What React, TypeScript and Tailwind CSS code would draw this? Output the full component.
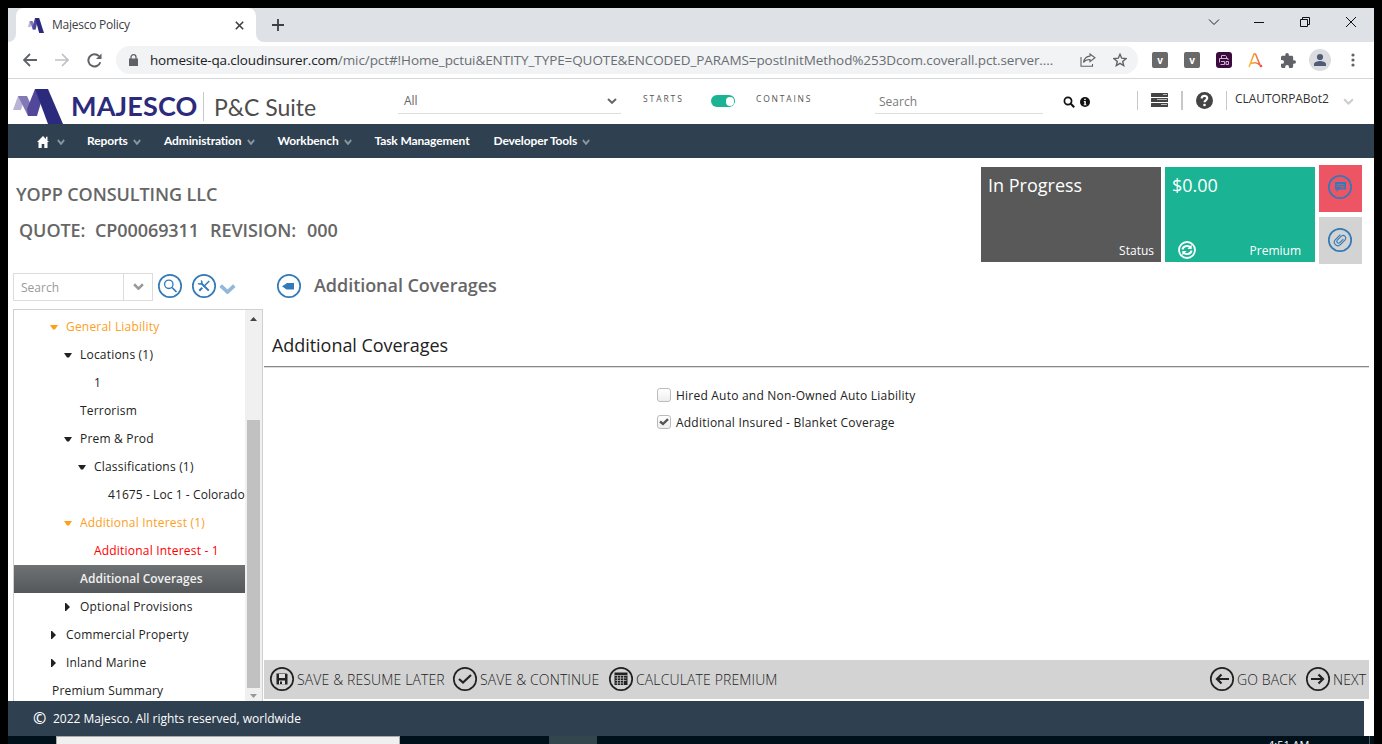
import React from "react";

type Kids = { children?: React.ReactNode };

const Chevron = ({ className, sw = 1.6 }: { className: string; sw?: number }) => (
  <svg className={className} viewBox="0 0 10 6" fill="none" stroke="currentColor" strokeWidth={sw} preserveAspectRatio="none">
    <path d="M1 1 L5 4.8 L9 1" />
  </svg>
);

const MLogo = ({ className }: { className: string }) => (
  <svg className={className} viewBox="0 0 50 35" preserveAspectRatio="none">
    <path d="M5 7H12L8 21H0Z" fill="#b9b4d6" />
    <path d="M5 7H14L23 27H15Z" fill="#8079b4" />
    <path d="M22 0H32L24 27H15L14 20Z" fill="#51489a" />
    <path d="M22 0H35L50 35H35Z" fill="#2c2a7d" />
  </svg>
);

const Ring = ({ children, className = "text-[#337ab7]" }: Kids & { className?: string }) => (
  <svg className={`h-[26px] w-[26px] shrink-0 ${className}`} viewBox="0 0 26 26" fill="none" stroke="currentColor" strokeWidth="1.5">
    <circle cx="13" cy="13" r="11.2" strokeWidth="1.7" />
    {children}
  </svg>
);

function TabStrip() {
  return (
    <div className="flex h-[34px] shrink-0 bg-[#dee1e6]">
      <div className="relative ml-2 flex h-[34px] w-[240px] shrink-0 items-center rounded-t-[8px] bg-white">
        <svg className="absolute -left-2 bottom-0 h-2 w-2" viewBox="0 0 8 8"><path d="M8 0V8H0A8 8 0 0 0 8 0" fill="#fff" /></svg>
        <svg className="absolute -right-2 bottom-0 h-2 w-2" viewBox="0 0 8 8"><path d="M0 0V8H8A8 8 0 0 1 0 0" fill="#fff" /></svg>
        <MLogo className="ml-3 h-[15px] w-4" />
        <span className="ml-2 w-[183px] whitespace-nowrap font-['Open_Sans',sans-serif] text-[12px] tracking-[-0.25px] text-[#3c4043]">Majesco Policy</span>
        <svg className="h-[9px] w-[9px]" viewBox="0 0 9 9" stroke="#3c4043" strokeWidth="1.6"><path d="M.8 .8L8.2 8.2M8.2 .8L.8 8.2" /></svg>
      </div>
      <svg className="ml-4 mt-[11px] h-3 w-3" viewBox="0 0 12 12" stroke="#3c4043" strokeWidth="1.8"><path d="M6 0V12M0 6H12" /></svg>
      <div className="ml-auto mr-[17px] mt-2 flex h-3 items-center gap-[34.5px]">
        <svg className="h-3 w-3" viewBox="0 0 12 12" fill="none" stroke="#222"><path d="M1 3.500L6 8.500L11 3.500" /></svg>
        <svg className="h-3 w-[10px]" viewBox="0 0 10 12" stroke="#111"><path d="M0 6.500H10" /></svg>
        <svg className="h-3 w-3" viewBox="0 0 12 12" fill="none" stroke="#111"><path d="M1.500 3.500H8.500V10.500H1.500ZM3.500 3.500V1.500H10.500V8.500H8.500" /></svg>
        <svg className="h-3 w-3" viewBox="0 0 12 12" stroke="#111"><path d="M1 1L11 11M11 1L1 11" /></svg>
      </div>
    </div>
  );
}

function AddressBar() {
  return (
    <div className="flex h-[37px] shrink-0 items-center border-b border-[#d5d6d8] bg-white">
      <svg className="ml-[15px] h-[14px] w-[14px]" viewBox="0 0 14 14" fill="none" stroke="#5f6368" strokeWidth="1.8"><path d="M14 7H1.500M7 1L1 7L7 13" /></svg>
      <svg className="ml-[18px] h-[14px] w-[14px]" viewBox="0 0 14 14" fill="none" stroke="#bdc1c6" strokeWidth="1.7"><path d="M0 7H12.500M7 1L13 7L7 13" /></svg>
      <svg className="ml-[18px] h-[15px] w-[15px]" viewBox="0 0 15 15" fill="none" stroke="#5f6368" strokeWidth="2"><path d="M13.300 9.200A6.100 6.100 0 1 1 12 3.200" /><path d="M14.500 .5V6H9Z" fill="#5f6368" stroke="none" /></svg>
      <div className="ml-[14px] flex h-7 w-[1022px] shrink-0 items-center rounded-full bg-[#f1f3f4]">
        <svg className="ml-[13px] h-3 w-[9px] shrink-0" viewBox="0 0 9 12"><path d="M0 4.500H9V12H0Z" fill="#5f6368" /><path d="M2 5V3A2.500 2.300 0 0 1 7 3V5" fill="none" stroke="#5f6368" strokeWidth="1.300" /></svg>
        <span className="ml-3 w-[928px] shrink-0 whitespace-nowrap font-['Open_Sans',sans-serif] text-[13.5px] tracking-[-0.088px] text-[#6a6e73]">
          <span className="tracking-[-0.17px] text-[#202124]">homesite-qa.cloudinsurer.com</span>/mic/pct#!Home_pctui&amp;ENTITY_TYPE=QUOTE&amp;ENCODED_PARAMS=postInitMethod%253Dcom.coverall.pct.server....
        </span>
        <svg className="ml-0.5 h-[14px] w-4 shrink-0" viewBox="0 0 16 14" fill="none" stroke="#5f6368" strokeWidth="1.100"><path d="M1 4V13.300H12.500V11M10 1L15 4.800L10 8.600V6.500C7 6.400 5 7.300 3.500 9.500C4 6 6 3.400 10 3.100Z" /></svg>
        <svg className="ml-[17px] h-[14px] w-[14px] shrink-0" viewBox="0 0 14 14" fill="none" stroke="#5f6368" strokeWidth="1.400"><path d="M7 1.300L8.700 5.200L13 5.600L9.700 8.400L10.700 12.600L7 10.400L3.300 12.600L4.300 8.400L1 5.600L5.300 5.200Z" /></svg>
      </div>
      <div className="ml-[14px] flex h-4 w-4 items-center justify-center rounded-[2px] bg-[#696969] font-['Open_Sans',sans-serif] text-[10px] font-bold leading-none text-white">v</div>
      <div className="ml-4 flex h-4 w-4 items-center justify-center rounded-[2px] bg-[#696969] font-['Open_Sans',sans-serif] text-[10px] font-bold leading-none text-white">v</div>
      <svg className="ml-4 h-4 w-4" viewBox="0 0 16 16" fill="none" stroke="#c9b3cf"><rect width="16" height="16" rx="3" fill="#3b0b3f" stroke="none" /><path d="M5.500 6.500V3.500H9.500L10.500 4.500V6.500M3.500 10.500V6.500H12V8M5 9.500H8.500M4.500 12.500H8.500V9.500M10 12.500V9.500H12.500V12.500Z" /></svg>
      <svg className="ml-4 h-[15px] w-[15px]" viewBox="0 0 15 15" fill="none" strokeWidth="1.500">
        <defs><linearGradient id="ag" x1="0" x2="1"><stop offset="0" stopColor="#fbbf2a" /><stop offset="1" stopColor="#f0503c" /></linearGradient></defs>
        <path d="M1 14L6 1H7.500L12 12M3 10.500C7 9 9 9.500 13 13" stroke="url(#ag)" /><circle cx="13" cy="13" r="1.300" fill="#f0503c" />
      </svg>
      <svg className="ml-[18px] h-[15px] w-[15px]" viewBox="2 1 21 21" fill="#5f6368"><path d="M20.500 11H19V7c0-1.100-.9-2-2-2h-4V3.500a2.500 2.500 0 0 0-5 0V5H4c-1.100 0-2 .9-2 2v3.800h1.500a2.700 2.700 0 0 1 0 5.400H2V20c0 1.100.9 2 2 2h3.800v-1.500a2.700 2.700 0 0 1 5.400 0V22H17c1.100 0 2-.9 2-2v-4h1.500a2.500 2.500 0 0 0 0-5z" /></svg>
      <svg className="ml-[13px] h-[22px] w-[22px]" viewBox="0 0 22 22"><circle cx="11" cy="11" r="11" fill="#dadce0" /><circle cx="11" cy="8" r="3.100" fill="#505b75" /><path d="M5 17V15.200C5 12.800 9 12 11 12S17 12.800 17 15.200V17Z" fill="#505b75" /></svg>
      <svg className="ml-5 h-[14px] w-1" viewBox="0 0 4 14" fill="#5f6368"><circle cx="2" cy="2" r="1.600" /><circle cx="2" cy="7" r="1.600" /><circle cx="2" cy="12" r="1.600" /></svg>
    </div>
  );
}

function SuiteHeader() {
  return (
    <div className="flex h-[45px] shrink-0 overflow-hidden bg-white">
      <MLogo className="ml-[5px] mt-[10px] h-[35px] w-[50px] shrink-0" />
      <div className="ml-[8px] mt-[11px] w-[133px] shrink-0 whitespace-nowrap font-['Lato',sans-serif] text-[27px] font-bold leading-[32px] tracking-[0.150px] text-[#2c2a7d]">MAJESCO</div>
      <div className="-ml-[1px] mt-[13px] h-[29px] w-px shrink-0 bg-[#c8c8c8]" />
      <div className="ml-[10px] mt-[12px] w-[184px] shrink-0 whitespace-nowrap font-['Lato',sans-serif] text-[23px] leading-[32px] text-[#4d4d4d]">P&amp;C Suite</div>
      <div className="mt-[11px] flex h-6 w-[223px] shrink-0 border-b border-[#dedede] font-['Open_Sans',sans-serif] text-[12px] text-[#666]">
        <span className="ml-1.5 w-[203px] leading-[22px]">All</span>
        <Chevron className="mt-[8px] h-[6px] w-[10px]" sw={2} />
      </div>
      <span className="ml-[22px] mt-[14px] w-[68px] shrink-0 font-['Open_Sans',sans-serif] text-[8.500px] leading-[12px] tracking-[1.900px] text-[#555]">STARTS</span>
      <span className="mt-[16px] flex h-3 w-6 shrink-0 items-center justify-end rounded-full bg-[#1ab394] px-px"><span className="h-[9px] w-[8px] rounded-full bg-white" /></span>
      <span className="ml-[21px] mt-[14px] w-[119px] shrink-0 font-['Open_Sans',sans-serif] text-[8.500px] leading-[12px] tracking-[1.800px] text-[#555]">CONTAINS</span>
      <span className="mt-[11px] h-6 w-[168px] shrink-0 border-b border-[#dedede] pl-1 font-['Open_Sans',sans-serif] text-[12px] leading-6 text-[#7a7a7a]">Search</span>
      <svg className="ml-[20px] mt-[17px] h-3 w-3" viewBox="0 0 12 12" fill="none" stroke="#111" strokeWidth="1.700"><circle cx="5" cy="5" r="3.600" /><path d="M7.800 7.800L11.200 11.200" strokeWidth="2" /></svg>
      <svg className="ml-[5px] mt-[18px] h-[10px] w-[10px]" viewBox="0 0 10 10"><circle cx="5" cy="5" r="5" fill="#111" /><path d="M4 4H5.800V7.500H6.500V8.300H3.600V7.500H4.300V4.800H3.700V4ZM4.200 1.700H5.800V3.100H4.200Z" fill="#fff" /></svg>
      <div className="ml-[47px] mt-[12px] h-[19px] w-px bg-[#c8c8c8]" />
      <svg className="ml-[13px] mt-[14px] h-[14px] w-[17px]" viewBox="0 0 17 14"><rect width="17" height="4" rx=".5" fill="#444" /><rect y="5" width="17" height="4" rx=".5" fill="#444" /><rect y="10" width="17" height="4" rx=".5" fill="#444" /><path d="M12 1.500H16M6 6.500H16M10 11.500H16" stroke="#bbb" /></svg>
      <div className="ml-[13px] mt-[12px] h-[19px] w-[2px] bg-[#c8c8c8]" />
      <svg className="ml-[13px] mt-[13px] h-[17px] w-[17px]" viewBox="0 0 17 17"><circle cx="8.500" cy="8.500" r="8.500" fill="#444" /><path d="M5.700 6.400C5.700 2.900 11.300 3.100 11.200 6.200C11.100 8 8.600 8.100 8.500 10.300" fill="none" stroke="#fff" strokeWidth="2.200" /><circle cx="8.500" cy="13" r="1.300" fill="#fff" /></svg>
      <div className="ml-[13px] mt-[12px] h-[19px] w-px bg-[#c8c8c8]" />
      <span className="ml-[8px] mt-[11px] w-[108px] whitespace-nowrap font-['Open_Sans',sans-serif] text-[12px] leading-[18px] tracking-[-0.050px] text-[#333]">CLAUTORPABot2</span>
      <Chevron className="mt-[19px] h-[7px] w-[11px] text-[#ccc]" sw={1.800} />
    </div>
  );
}

function NavBar() {
  const items: [string, string, boolean][] = [
    ["Reports", "w-[46px]", true],
    ["Administration", "w-[82.500px]", true],
    ["Workbench", "w-[66px]", true],
    ["Task Management", "w-[119px]", false],
    ["Developer Tools", "w-[88.500px]", true],
  ];
  return (
    <div className="flex h-[34px] shrink-0 items-center bg-[#2f4050] font-['Lato',sans-serif] text-[12px] font-bold tracking-[-0.130px] text-white">
      <svg className="ml-[28.500px] mt-[2px] h-3 w-3" viewBox="0 0 12 12" fill="#fff"><path d="M6 0L12 6H10.500V12H7.300V8H4.700V12H1.500V6H0Z" /><path d="M9 .8H10.500V4H9Z" /></svg>
      <Chevron className="ml-2 mr-[22.500px] mt-0.5 h-[6px] w-[8px] text-[#8a96a0]" sw={2.200} />
      {items.map(([t, w, c]) => (
        <React.Fragment key={t}>
          <span className={`${w} shrink-0 whitespace-nowrap`}>{t}</span>
          {c && <Chevron className="mr-[23px] mt-0.5 h-[6px] w-[8px] text-[#8a96a0]" sw={2.200} />}
        </React.Fragment>
      ))}
    </div>
  );
}

function QuoteHeader() {
  return (
    <div className="flex h-[110px] shrink-0 font-['Open_Sans',sans-serif]">
      <div className="w-[973px] shrink-0 whitespace-pre text-[18px] font-semibold tracking-[-0.080px] text-[#666]">
        <div className="ml-2 mt-[24px] leading-6">YOPP CONSULTING LLC</div>
        <div className="ml-[11px] mt-3 flex leading-6">
          <span className="w-[76px]">QUOTE:</span><span className="w-[115px]">CP00069311</span><span className="w-[97px]">REVISION:</span><span>000</span>
        </div>
      </div>
      <div className="mt-[9px] flex h-[95px] w-[180px] shrink-0 flex-col justify-between bg-[#595959] px-[7px] pb-[2px] pt-[3px] text-white">
        <span className="text-[18px] leading-[31px]">In Progress</span>
        <span className="self-end text-[12px] leading-[18px]">Status</span>
      </div>
      <div className="ml-1 mt-[9px] flex h-[95px] w-[150px] shrink-0 flex-col justify-between bg-[#1ab394] px-[7px] pb-[2px] pt-[3px] text-white">
        <span className="text-[18px] leading-[31px]">$0.00</span>
        <div className="flex items-center justify-between pl-[6px] pr-[7px] text-[12px] leading-[18px]">
          <svg className="-mt-0.5 h-[18px] w-[18px]" viewBox="0 0 18 18" fill="none" stroke="#fff" strokeWidth="1.800"><circle cx="9" cy="9" r="8" /><path d="M4.500 8.500A4.500 4 0 0 1 12 6M13.500 9.500A4.500 4 0 0 1 6 12" strokeWidth="2" /><path d="M13.700 3.500V8H9.500ZM4.300 14.500V10H8.500Z" fill="#fff" stroke="none" /></svg>
          <span>Premium</span>
        </div>
      </div>
      <div className="ml-1 mt-[7px] flex w-[43px] shrink-0 flex-col gap-[5px]">
        <div className="flex h-[47px] bg-[#ed5565] pl-2 pt-[9px]">
          <Ring><path d="M8 8H19V15.500H12L9.500 18V15.500H8Z" fill="currentColor" stroke="none" /><path d="M9.500 10.500H17.500M9.500 12.500H17.500M14 14H17.500" stroke="#ed5565" strokeWidth=".8" strokeOpacity=".8" /></Ring>
        </div>
        <div className="flex h-[47px] bg-[#d3d3d3] pl-2 pt-[10px]">
          <Ring><g transform="rotate(45 13 13)" strokeWidth="1.100"><path d="M9.500 9V16A3.500 3.500 0 0 0 16.500 16V9A2.700 2.700 0 0 0 11.200 9V15A1.700 1.700 0 0 0 14.700 15V10" /></g></Ring>
        </div>
      </div>
    </div>
  );
}

type Node = { t: string; pad: string; a?: "d" | "r"; c?: string };
const tree: Node[] = [
  { t: "General Liability", pad: "pl-[35px]", a: "d", c: "text-[#fda01c] font-medium" },
  { t: "Locations (1)", pad: "pl-[49px]", a: "d" },
  { t: "1", pad: "pl-[63px]" },
  { t: "Terrorism", pad: "pl-[49px]" },
  { t: "Prem & Prod", pad: "pl-[49px]", a: "d" },
  { t: "Classifications (1)", pad: "pl-[63px]", a: "d" },
  { t: "41675 - Loc 1 - Colorado", pad: "pl-[77px]", c: "text-[#222] tracking-[0.080px]" },
  { t: "Additional Interest (1)", pad: "pl-[49px]", a: "d", c: "text-[#fda01c] font-medium" },
  { t: "Additional Interest - 1", pad: "pl-[63px]", c: "text-[#ff0000]" },
  { t: "Additional Coverages", pad: "pl-[49px]", c: "bg-gradient-to-b from-[#6e7275] to-[#55585a] font-semibold tracking-normal text-[#f0f0f0]" },
  { t: "Optional Provisions", pad: "pl-[49px]", a: "r" },
  { t: "Commercial Property", pad: "pl-[35px]", a: "r" },
  { t: "Inland Marine", pad: "pl-[35px]", a: "r" },
  { t: "Premium Summary", pad: "pl-[21px]" },
];

function Sidebar() {
  return (
    <div className="ml-[5px] flex w-[251px] shrink-0 flex-col font-['Open_Sans',sans-serif] text-[12px]">
      <div className="flex h-[41px] shrink-0">
        <div className="mt-[5px] flex h-7 w-[140px] shrink-0 border border-[#dcdcdc] text-[#999]">
          <span className="w-[110px] border-r border-[#dcdcdc] pl-[7px] leading-[27px]">Search</span>
          <Chevron className="ml-[8.500px] mt-[8.500px] h-[7px] w-[11px]" sw={2.300} />
        </div>
        <div className="ml-1 mt-[5px] flex">
          <Ring><circle cx="11.800" cy="11.300" r="4.200" strokeWidth="1.300" /><path d="M15 14.500L19.500 19" strokeWidth="1.700" /></Ring>
          <div className="w-2" />
          <Ring><path d="M10.500 10.500L17.800 17.600" strokeWidth="2" /><path d="M18.300 8L12.500 13.800" strokeWidth="1.500" /><path d="M7.200 10.300A2.200 2.200 0 0 0 10.800 10A2.200 2.200 0 0 0 10 7.500" strokeWidth="1.500" /><path d="M8.300 17.800L11.300 14.800" strokeWidth="2" /></Ring>
          <Chevron className="ml-[2px] mt-[11px] h-[10px] w-[17px] text-[#94b8da]" sw={2.200} />
        </div>
      </div>
      <div className="flex h-[392px] w-[250px] shrink-0 overflow-hidden border border-b-0 border-[#d0d0d0]">
        <div className="h-[391px] w-[231px] shrink-0 overflow-hidden pt-[3px] tracking-[0.200px]">
          {tree.map((n) => (
            <div key={n.t} className={`flex h-7 items-center ${n.pad} ${n.c ?? "text-[#222]"}`}>
              <span className="flex w-[17px] shrink-0 items-center">
                {n.a === "d" && <svg className="ml-px h-[5px] w-2" viewBox="0 0 8 5" fill="currentColor"><path d="M0 0H8L5 4.500H3Z" /></svg>}
                {n.a === "r" && <svg className="ml-[2px] h-2 w-[5px]" viewBox="0 0 5 8" fill="currentColor"><path d="M0 0H1L5 4L1 8H0Z" /></svg>}
              </span>
              <span className="whitespace-nowrap pb-px">{n.t}</span>
            </div>
          ))}
        </div>
        <div className="flex w-[17px] shrink-0 flex-col items-center bg-[#f0f0f0]">
          <svg className="mt-[7px] h-1 w-[7px]" viewBox="0 0 7 4"><path d="M0 4L3.500 0L7 4Z" fill="#444" /></svg>
          <div className="mt-[99px] h-[268px] w-[13px] bg-[#c1c1c1]" />
          <svg className="mt-[6px] h-1 w-[7px]" viewBox="0 0 7 4"><path d="M0 0L3.500 4L7 0Z" fill="#999" /></svg>
        </div>
      </div>
    </div>
  );
}

const Action = ({ label, w, children }: Kids & { label: string; w: string }) => (
  <div className={`flex shrink-0 items-center whitespace-nowrap ${w}`}>
    <Ring className="text-[#222]">{children}</Ring>
    <span className="ml-[2px]">{label}</span>
  </div>
);

const Check = ({ on, label }: { on?: boolean; label: string }) => (
  <div className="flex h-[27px] items-center">
    <span className="mb-px flex h-[14px] w-[14px] items-center justify-center rounded-[3px] border border-[#bbb] bg-gradient-to-b from-white to-[#eee]">
      {on && <svg className="h-2 w-[10px]" viewBox="0 0 10 8" fill="none" stroke="#555" strokeWidth="2.400"><path d="M1 3.500L4 6L9 1.200" /></svg>}
    </span>
    <span className="ml-[5px] tracking-[0.220px]">{label}</span>
  </div>
);

function Main() {
  return (
    <div className="flex w-[1105px] shrink-0 flex-col font-['Open_Sans',sans-serif] text-[#222]">
      <div className="ml-3 mt-[5px] flex h-[26px] shrink-0 items-center">
        <Ring><path d="M6 13.300L10.500 10.500V10H18V16.500H10.500Z" fill="currentColor" stroke="none" /></Ring>
        <span className="ml-3 pb-0.5 text-[18px] font-semibold leading-6 tracking-[-0.050px] text-[#666]">Additional Coverages</span>
      </div>
      <div className="ml-2 mt-[33px] h-[34px] shrink-0 text-[18px] leading-[26px] tracking-[-0.050px]">Additional Coverages</div>
      <div className="h-[2px] shrink-0 border-b border-[#ddd] bg-[#888]" />
      <div className="ml-[393px] mt-[14px] text-[12px]">
        <Check label="Hired Auto and Non-Owned Auto Liability" />
        <Check on label="Additional Insured - Blanket Coverage" />
      </div>
      <div className="mb-[2px] mt-auto flex h-[39px] shrink-0 items-center bg-[#d3d3d3] pb-px pl-[5px] text-[14px] font-light tracking-[0.130px]">
        <Action label="SAVE & RESUME LATER" w="w-[183px]">
          <path d="M7.500 7.500H17.500L18.500 8.500V18.500H7.500Z" fill="currentColor" stroke="none" /><path d="M10 8H16V12H10ZM10 14.500H16V18.500H10Z" fill="#ddd" stroke="none" /><path d="M11 15.500H13V18H11Z" fill="currentColor" stroke="none" />
        </Action>
        <Action label="SAVE & CONTINUE" w="w-[156px]"><path d="M7 13L11 16.500L19 9" strokeWidth="2.200" /></Action>
        <Action label="CALCULATE PREMIUM" w="w-[180px]">
          <path d="M6.500 6.500H19.500V19H6.500Z" fill="currentColor" stroke="none" /><path d="M6.500 9.500H19.500M7.500 12H18.500M7.500 14.500H18.500M7.500 17H15M9.500 9.500V19M12.500 9.500V19M15.500 9.500V19" stroke="#ccc" strokeWidth=".7" />
        </Action>
        <div className="ml-auto flex">
          <Action label="GO BACK" w="w-[96px]"><path d="M7.500 13H20M12.500 8.500L8 13L12.500 17.500" strokeWidth="2.200" /></Action>
          <Action label="NEXT" w="w-[64px]"><path d="M6 13H18.500M13.500 8.500L18 13L13.500 17.500" strokeWidth="2.200" /></Action>
        </div>
      </div>
    </div>
  );
}

export default function App() {
  return (
    <div className="flex h-[744px] w-[1382px] flex-col overflow-hidden bg-black px-2 pt-2">
      <div className="flex h-[728px] w-[1366px] shrink-0 flex-col bg-white">
        <TabStrip />
        <AddressBar />
        <SuiteHeader />
        <NavBar />
        <QuoteHeader />
        <div className="flex h-[433px] shrink-0">
          <Sidebar />
          <Main />
        </div>
        <div className="flex h-[35px] w-[1356px] shrink-0 items-center bg-[#2f4050] font-['Open_Sans',sans-serif] text-[12px] text-white">
          <span className="ml-[25px] w-[20px] pb-px text-[16px] font-semibold leading-5">©</span>
          <span>2022 Majesco. All rights reserved, worldwide</span>
        </div>
      </div>
      <div className="flex h-2 w-[1366px] shrink-0 overflow-hidden bg-[#01111c]">
        <div className="ml-12 h-2 w-[344px] border border-b-0 border-[#aaa] bg-[#f0f0f0]" />
        <div className="ml-[149px] h-2 w-12 bg-[#34464d]" />
        <div className="ml-[671px] mt-[3px] h-[5px] w-[101px] overflow-hidden font-['Open_Sans',sans-serif] text-[11px] leading-[14px] text-white"><div className="-mt-px">4:51 AM</div></div>
        <div className="h-2 w-px bg-[#555]" />
      </div>
    </div>
  );
}
